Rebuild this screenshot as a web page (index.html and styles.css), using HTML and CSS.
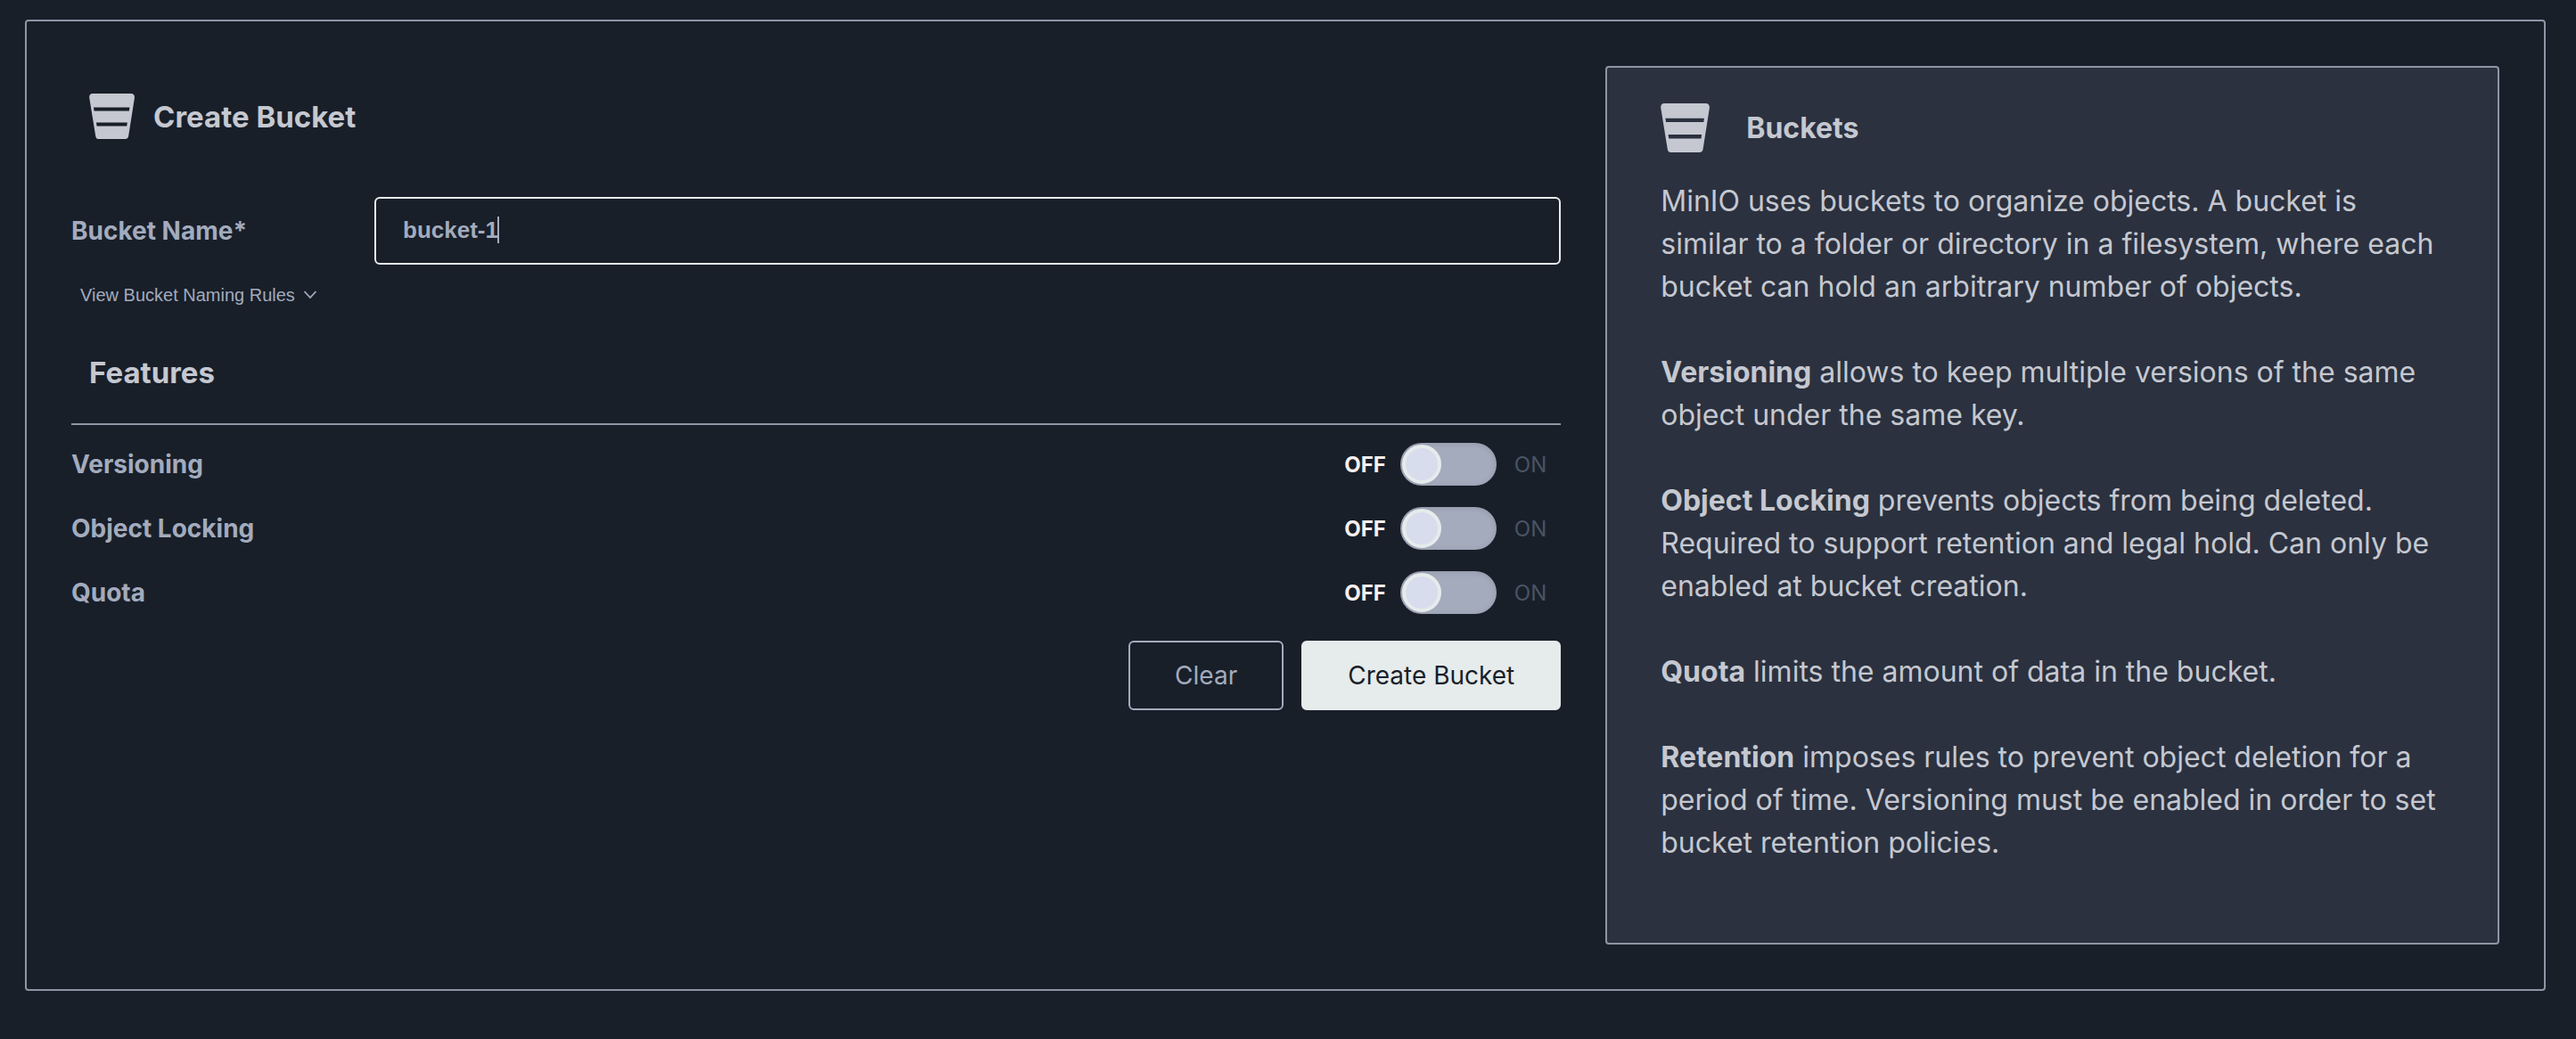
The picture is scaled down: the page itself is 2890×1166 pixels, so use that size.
FILE: index.html
```html
<!DOCTYPE html>
<html lang="en">
<head>
<meta charset="utf-8">
<title>Create Bucket</title>
<link rel="stylesheet" href="styles.css">
</head>
<body>
<svg class="sprite" aria-hidden="true">
  <symbol id="bucket" viewBox="0 0 52 52">
    <path fill="currentColor" fill-rule="evenodd" d="M4 0H47Q51 0 51 4.500L44.200 47.500Q43.600 51 40.500 51H10.500Q7.700 51 7.200 47.500L0.200 4.500Q0 0 4 0ZM5 15.600L5.600 19.600H44.900L45.400 15.600ZM8 32.500L8.600 36.600H42.300L42.800 32.500Z"/>
  </symbol>
</svg>
<main class="page">
  <form class="form">
    <h1 class="form-title"><svg class="title-icon" aria-hidden="true"><use href="#bucket"/></svg>Create Bucket</h1>
    <div class="field">
      <label class="label" for="bucket-name">Bucket Name*</label>
      <div class="input-box">
        <input class="input" id="bucket-name" type="text" value="bucket-1">
        <span class="caret"></span>
      </div>
    </div>
    <button class="rules" type="button">View Bucket Naming Rules<svg class="chevron" viewBox="0 0 14 10" aria-hidden="true"><path d="M0.500 1L7 8L13.500 1" fill="none" stroke="currentColor" stroke-width="1.800"/></svg></button>
    <h2 class="section-title">Features</h2>
    <div class="options">
      <div class="option"><label class="label" for="versioning">Versioning</label><span class="off">OFF</span><input class="switch" type="checkbox" id="versioning"><span class="on">ON</span></div>
      <div class="option"><label class="label" for="locking">Object Locking</label><span class="off">OFF</span><input class="switch" type="checkbox" id="locking"><span class="on">ON</span></div>
      <div class="option"><label class="label" for="quota">Quota</label><span class="off">OFF</span><input class="switch" type="checkbox" id="quota"><span class="on">ON</span></div>
    </div>
    <div class="actions">
      <button class="button" type="reset">Clear</button>
      <button class="button primary" type="submit">Create Bucket</button>
    </div>
  </form>
  <aside class="help">
    <h2 class="help-title"><svg class="help-icon" aria-hidden="true"><use href="#bucket"/></svg>Buckets</h2>
    <p>MinIO uses buckets to organize objects. A bucket is similar to a folder or directory in a filesystem, where each bucket can hold an arbitrary number of objects.</p>
    <p><b>Versioning</b> allows to keep multiple versions of the same object under the same key.</p>
    <p><b>Object Locking</b> prevents objects from being deleted. Required to support retention and legal hold. Can only be enabled at bucket creation.</p>
    <p><b>Quota</b> limits the amount of data in the bucket.</p>
    <p><b>Retention</b> imposes rules to prevent object deletion for a period of time. Versioning must be enabled in order to set bucket retention policies.</p>
  </aside>
</main>
</body>
</html>
```
FILE: styles.css
```css
*, *::before { box-sizing: border-box; }
body {
  margin: 0;
  background: #181f29;
  color: #c5c8d0;
  font-family: Inter, sans-serif;
}
h1, h2, p { margin: 0; }
button, input { font-family: inherit; margin: 0; }
.sprite { display: none; }
.page {
  margin: 22px 34px 54px 28px;
  padding: 50px;
  border: 2px solid #8e96a5;
  border-radius: 4px;
  display: grid;
  grid-template-columns: 5fr 3fr;
  gap: 50px;
}
.form { min-width: 0; }
.form-title {
  display: flex;
  align-items: center;
  gap: 20px;
  height: 52px;
  margin: 31px 20px 64px;
  font-size: 33px;
  font-weight: 700;
}
.title-icon { width: 52px; height: 52px; }
.field { display: flex; align-items: center; }
.label {
  color: #a3abbd;
  font-size: 28px;
  font-weight: 700;
  line-height: 36px;
}
.field .label { width: 340px; }
.input-box { position: relative; flex: 1; min-width: 0; }
.input {
  display: block;
  width: 100%;
  height: 76px;
  padding: 0 30px 2px;
  border: 2px solid #e6ebeb;
  border-radius: 6px;
  outline: none;
  background: transparent;
  color: #a3abbd;
  font-family: "Liberation Sans", Arial, sans-serif;
  font-size: 26px;
  font-weight: 700;
}
/* text cursor after the typed name */
.caret {
  position: absolute;
  left: 138px;
  top: 22px;
  width: 2px;
  height: 30px;
  background: #a3abbd;
}
.rules {
  display: flex;
  align-items: center;
  gap: 10px;
  height: 36px;
  margin: 16px 0 0 10px;
  padding: 0;
  border: 0;
  background: none;
  color: #a3abbd;
  font-family: "Liberation Sans", Arial, sans-serif;
  font-size: 20px;
}
.chevron { width: 14px; height: 10px; }
.section-title {
  margin-top: 32px;
  padding: 16px 20px 36px;
  border-bottom: 2px solid #8e96a5;
  font-size: 33px;
  line-height: 42px;
  font-weight: 700;
}
.options { margin-top: 20px; display: grid; gap: 24px; }
.option {
  display: flex;
  align-items: center;
  height: 48px;
  padding-right: 16px;
}
.option .label { flex: 1; }
.off, .on { font-size: 24px; }
.off { color: #f5eff1; font-weight: 700; }
.on { color: #4a5364; }
.switch {
  appearance: none;
  width: 108px;
  height: 48px;
  margin: 0 20px 0 16px;
  padding: 2px;
  border-radius: 24px;
  background: #a3abbd;
  box-shadow: inset 0 1px 6px rgb(0 0 0 / 12%);
}
.switch::before {
  content: "";
  display: block;
  width: 44px;
  height: 44px;
  border: 4px solid #e6ebeb;
  border-radius: 50%;
  background: #d7dded;
}
.actions {
  display: flex;
  justify-content: flex-end;
  gap: 20px;
  margin-top: 30px;
}
.button {
  height: 78px;
  padding: 0 50px;
  border: 2px solid #a3abbd;
  border-radius: 6px;
  background: transparent;
  color: #a3abbd;
  font-size: 28px;
}
.primary { background: #e6ebeb; border-color: #e6ebeb; color: #181f29; }
.help {
  padding: 38px 60px 88px;
  border: 2px solid #8e96a5;
  border-radius: 4px;
  background: #2b313f;
  font-size: 32px;
  line-height: 48px;
}
.help-title {
  display: flex;
  align-items: center;
  gap: 40px;
  height: 60px;
  margin-bottom: 28px;
  font-size: 32px;
}
.help-icon { width: 56px; height: 56px; }
.help p + p { margin-top: 48px; }
```
